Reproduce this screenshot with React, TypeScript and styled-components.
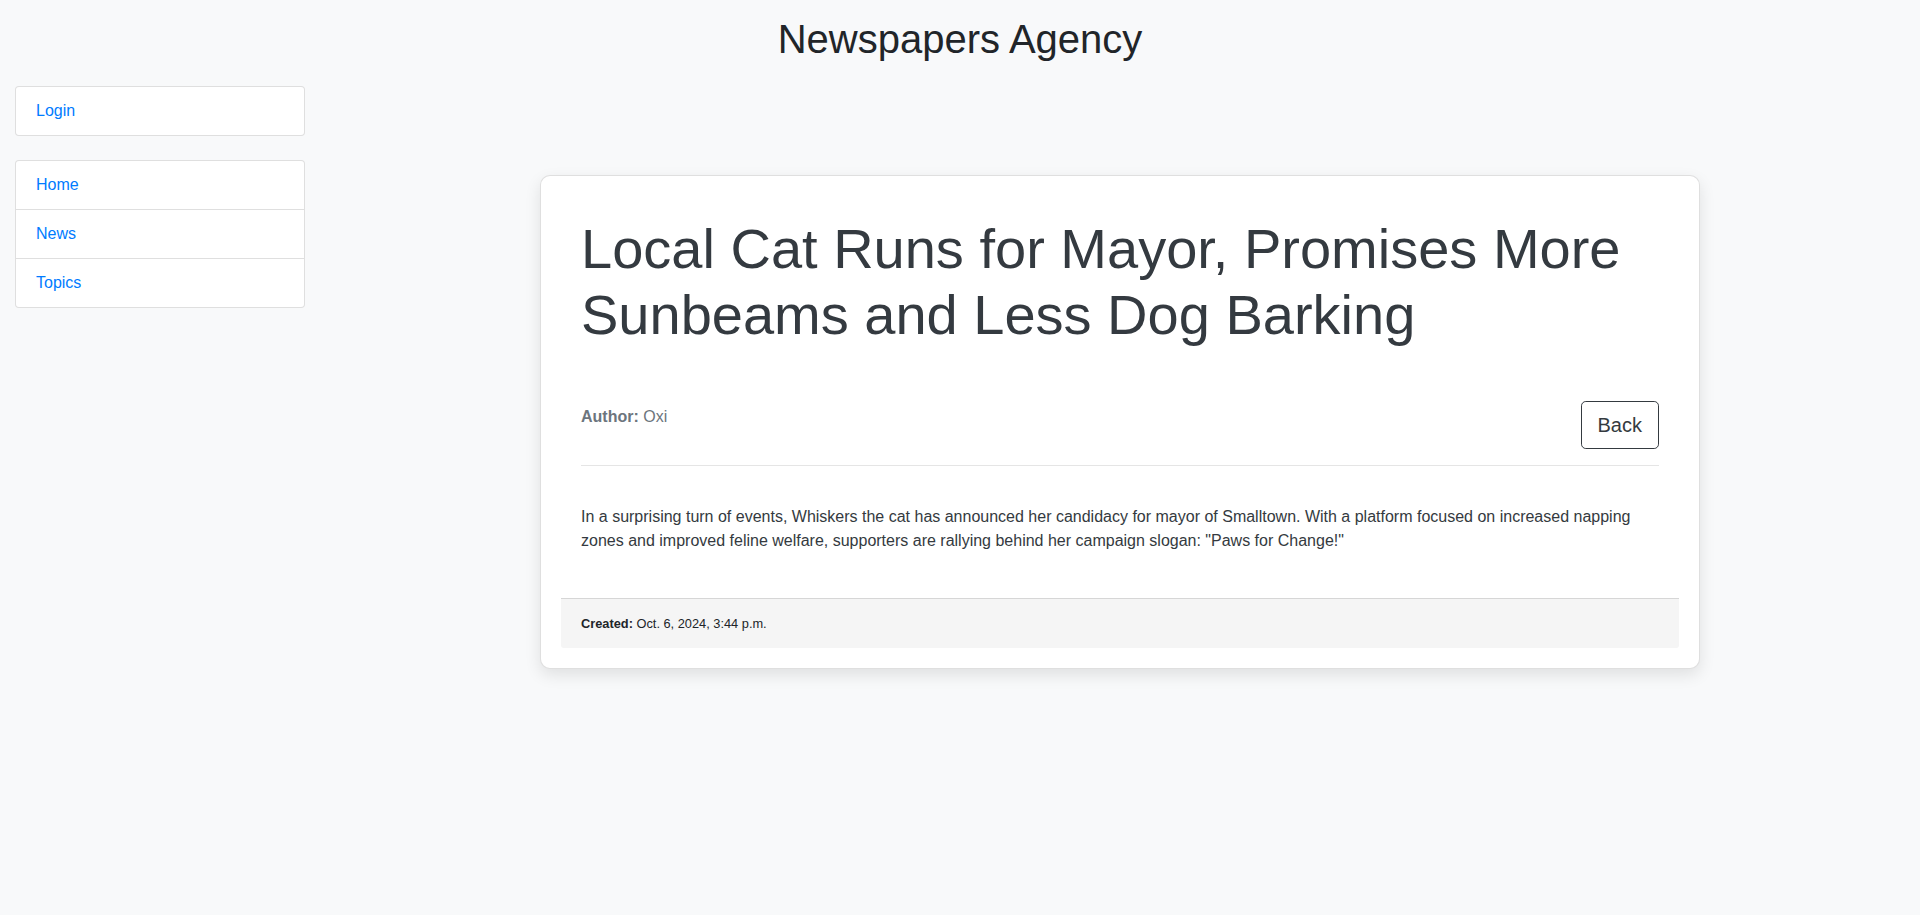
import React from "react";
import styled, { createGlobalStyle } from "styled-components";

const GlobalStyle = createGlobalStyle`
  * { box-sizing: border-box; }
  html, body { margin: 0; padding: 0; }
  body {
    background: #f8f9fa;
    font-family: "Liberation Sans", Arial, sans-serif;
    font-size: 16px;
    line-height: 1.5;
    color: #212529;
  }
`;

const Page = styled.div`
  min-height: 915px;
  background: #f8f9fa;
`;

const Header = styled.header`
  padding-top: 15px;
  text-align: center;
`;

const SiteTitle = styled.h1`
  margin: 0;
  font-size: 40px;
  font-weight: 400;
  line-height: 1.2;
  color: #212529;
`;

const Layout = styled.div`
  display: grid;
  grid-template-columns: 320px 1fr;
  margin-top: 23px;
`;

const Sidebar = styled.aside`
  padding: 0 15px;
  display: flex;
  flex-direction: column;
  gap: 24px;
`;

const ListGroup = styled.ul`
  list-style: none;
  margin: 0;
  padding: 0;
  background: #fff;
  border: 1px solid rgba(0, 0, 0, 0.125);
  border-radius: 4px;
`;

const ListItem = styled.li`
  padding: 12px 20px;
  line-height: 24px;
  & + & {
    border-top: 1px solid rgba(0, 0, 0, 0.125);
  }
`;

const NavLink = styled.a`
  color: #007bff;
  text-decoration: none;
  font-size: 16px;
`;

const Main = styled.main`
  display: flex;
  justify-content: center;
  padding-top: 89px;
`;

const Card = styled.article`
  width: 1160px;
  background: #fff;
  border: 1px solid rgba(0, 0, 0, 0.125);
  border-radius: 10px;
  box-shadow: 0 6px 16px rgba(0, 0, 0, 0.1);
  padding: 20px;
`;

const CardBody = styled.div`
  padding: 20px 20px 45px;
`;

const ArticleTitle = styled.h2`
  margin: 0 0 53px;
  font-size: 56px;
  font-weight: 400;
  line-height: 66px;
  color: #343a40;
`;

const MetaRow = styled.div`
  display: flex;
  justify-content: space-between;
  align-items: flex-start;
`;

const Author = styled.p`
  margin: 4px 0 0;
  color: #6c757d;
  font-size: 16px;
  line-height: 24px;
`;

const Label = styled.strong`
  font-weight: 700;
`;

const BackButton = styled.button`
  font-family: "Liberation Sans", Arial, sans-serif;
  font-size: 20px;
  line-height: 30px;
  padding: 8px 16px;
  color: #343a40;
  background: transparent;
  border: 1px solid #343a40;
  border-radius: 4.8px;
  cursor: pointer;
`;

const Divider = styled.hr`
  margin: 16px 0 0;
  border: 0;
  border-top: 1px solid rgba(0, 0, 0, 0.1);
`;

const Body = styled.p`
  margin: 39px 0 0;
  color: #343a40;
  font-size: 16px;
  line-height: 24px;
`;

const CardFooter = styled.footer`
  background: #f5f5f5;
  border-top: 1px solid rgba(0, 0, 0, 0.125);
  border-radius: 0 0 3px 3px;
  padding: 12px 20px;
`;

const FooterLine = styled.p`
  margin: 0;
  line-height: 24px;
  color: #212529;
`;

const Small = styled.small`
  font-size: 12.8px;
`;

export default function App() {
  return (
    <Page>
      <GlobalStyle />
      <Header>
        <SiteTitle>Newspapers Agency</SiteTitle>
      </Header>
      <Layout>
        <Sidebar>
          <ListGroup>
            <ListItem>
              <NavLink href="#">Login</NavLink>
            </ListItem>
          </ListGroup>
          <ListGroup>
            <ListItem>
              <NavLink href="#">Home</NavLink>
            </ListItem>
            <ListItem>
              <NavLink href="#">News</NavLink>
            </ListItem>
            <ListItem>
              <NavLink href="#">Topics</NavLink>
            </ListItem>
          </ListGroup>
        </Sidebar>
        <Main>
          <Card>
            <CardBody>
              <ArticleTitle>
                Local Cat Runs for Mayor, Promises More Sunbeams and Less Dog Barking
              </ArticleTitle>
              <MetaRow>
                <Author>
                  <Label>Author:</Label> Oxi
                </Author>
                <BackButton>Back</BackButton>
              </MetaRow>
              <Divider />
              <Body>
                In a surprising turn of events, Whiskers the cat has announced her candidacy for
                mayor of Smalltown. With a platform focused on increased napping zones and improved
                feline welfare, supporters are rallying behind her campaign slogan: "Paws for
                Change!"
              </Body>
            </CardBody>
            <CardFooter>
              <FooterLine>
                <Small>
                  <Label>Created:</Label> Oct. 6, 2024, 3:44 p.m.
                </Small>
              </FooterLine>
            </CardFooter>
          </Card>
        </Main>
      </Layout>
    </Page>
  );
}
